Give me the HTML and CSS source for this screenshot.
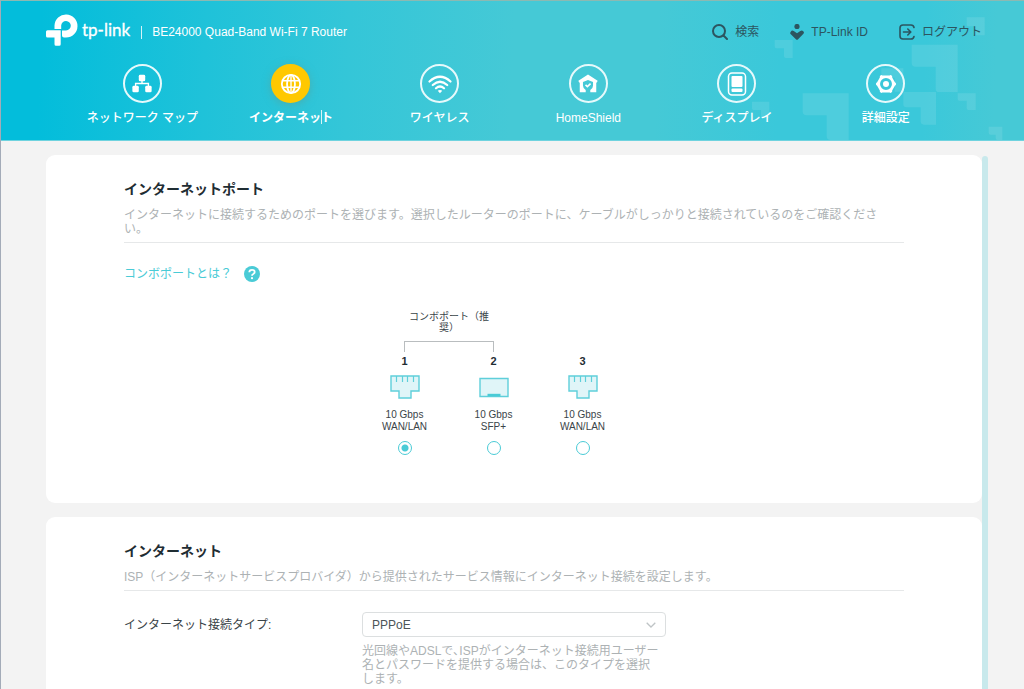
FILE: index.html
```html
<!DOCTYPE html>
<html lang="ja">
<head>
  <meta charset="UTF-8">
  <meta name="viewport" content="width=device-width, initial-scale=1.0">
  <title>BE24000 Quad-Band Wi-Fi 7 Router</title>
  <link rel="stylesheet" href="styles.css">
</head>
<body>
  <header class="header">
    <svg class="header-pattern" viewBox="0 0 1032 420" aria-hidden="true">
      <path d="M284 120h54v54h-20q-6 0-6-6v-23h-22q-6 0-6-6z"/>
      <path d="M695 134h138v142h-56q-10 0-10-10v-66h-60q-12 0-12-12z"/>
      <path d="M368 280h138v140h-54q-12 0-12-12v-62h-60q-12 0-12-12z"/>
      <path d="M670 276h98v98h-36q-10 0-10-10v-42h-42q-10 0-10-10z"/>
      <path d="M216 305h52v50h-20q-5 0-5-5v-20h-22q-5 0-5-5z"/>
      <path d="M833 280h54v50h-22q-5 0-5-5v-23h-22q-5 0-5-5z"/>
      <path d="M860 52h54v54h-22q-5 0-5-5v-22h-22q-5 0-5-5z"/>
      <path d="M926 380h41v40h-14q-6 0-6-6v-10h-15q-6 0-6-6z"/>
      <path d="M604 205h66v70h-26v-42h-34q-6 0-6-6z"/>
    </svg>

    <div class="topbar">
      <a class="logo" href="#">
        <svg width="32" height="32" viewBox="0 0 32 32" aria-hidden="true">
          <path fill="#fff" d="M8.500 15V11.500A11.500 11.500 0 1 1 20 23.500H18a2 2 0 0 1-2-2V16.500h4A4.800 4.800 0 1 0 15.200 11.500V15z"/>
          <path fill="#fff" d="M1.500 16.300h13.200v14a1.500 1.500 0 0 1-1.500 1.500H10a1.500 1.500 0 0 1-1.500-1.500V23.500h-7A1.500 1.500 0 0 1 0 22v-4.200a1.500 1.500 0 0 1 1.500-1.500z"/>
        </svg>
        <span class="logo-name">tp-link</span>
      </a>
      <span class="model">BE24000 Quad-Band Wi-Fi 7 Router</span>

      <div class="tools">
        <a class="tool" href="#">
          <svg width="16" height="16" viewBox="0 0 16 16" fill="none" stroke="#2c5560" stroke-width="2" stroke-linecap="round" aria-hidden="true">
            <circle cx="7" cy="7" r="6"/><path d="M11.500 11.500l3.500 3.500"/>
          </svg>
          検索
        </a>
        <a class="tool" href="#">
          <svg width="14" height="16" viewBox="0 0 14 16" fill="#2c5560" aria-hidden="true">
            <circle cx="7" cy="2.500" r="2.600"/>
            <path d="M.8 7.700a2 2 0 0 1 2.900-.6L7 9.300l3.300-2.200a2 2 0 0 1 2.900 3l-5.100 5.200a1.600 1.600 0 0 1-2.200 0L.8 10.300a1.900 1.900 0 0 1 0-2.600z"/>
          </svg>
          TP-Link ID
        </a>
        <a class="tool" href="#">
          <svg width="16" height="16" viewBox="0 0 16 16" fill="none" stroke="#2c5560" stroke-width="1.600" stroke-linecap="round" stroke-linejoin="round" aria-hidden="true">
            <path d="M15 3.500Q14.500 1 12 1H4Q1 1 1 4v8q0 3 3 3h8q2.500 0 3-2.500"/>
            <path d="M4.500 8h7M8.800 5l3 3-3 3"/>
          </svg>
          ログアウト
        </a>
      </div>
    </div>

    <nav class="nav">
      <a class="nav-item" href="#">
        <span class="nav-icon">
          <svg width="22" height="22" viewBox="0 0 24 24" fill="#fff" aria-hidden="true">
            <rect x="8.500" y="2" width="7" height="7" rx="1.500"/>
            <rect x="1.500" y="14" width="7" height="7" rx="1.500"/>
            <rect x="15.500" y="14" width="7" height="7" rx="1.500"/>
            <path d="M12 8v4M5 15v-3.500h14V15" fill="none" stroke="#fff" stroke-width="1.500"/>
          </svg>
        </span>
        <span class="nav-label">ネットワーク マップ</span>
      </a>
      <a class="nav-item active" href="#">
        <span class="nav-icon">
          <svg width="22" height="22" viewBox="0 0 24 24" fill="none" stroke="#fff" stroke-width="2" aria-hidden="true">
            <circle cx="12" cy="12" r="10"/>
            <ellipse cx="12" cy="12" rx="4.300" ry="10"/>
            <path d="M12 2v20M3 8.500h18M3 15.500h18" stroke-width="1.500"/>
          </svg>
        </span>
        <span class="nav-label">インターネッ<span class="caret"></span>ト</span>
      </a>
      <a class="nav-item" href="#">
        <span class="nav-icon">
          <svg width="24" height="20" viewBox="0 0 24 20" fill="none" stroke="#fff" stroke-width="2.200" stroke-linecap="round" aria-hidden="true">
            <path d="M1.500 7.500q10.500-9.500 21 0M4.800 11q7.200-6.500 14.400 0M8 14.300q4-3.600 8 0"/>
            <path d="M9.800 16.800q2.200-1.400 4.400 0L12 19.300z" fill="#fff" stroke="none"/>
          </svg>
        </span>
        <span class="nav-label">ワイヤレス</span>
      </a>
      <a class="nav-item" href="#">
        <span class="nav-icon">
          <svg width="22" height="22" viewBox="0 0 24 24" aria-hidden="true">
            <path fill="#fff" fill-rule="evenodd" d="M12 1.500l10.500 7-.9 2-.6-.3V21h-6.500v-2.500q3-2 3-5V9.700L12 7.500 6.500 9.700v3.800q0 3 3 5V21H3V10.200l-.6.300-.9-2z"/>
            <path d="M9.300 13l2 1.900 3.500-3.300" fill="none" stroke="#fff" stroke-width="1.700"/>
          </svg>
        </span>
        <span class="nav-label">HomeShield</span>
      </a>
      <a class="nav-item" href="#">
        <span class="nav-icon">
          <svg width="24" height="24" viewBox="0 0 24 24" aria-hidden="true">
            <rect x="3.500" y="1" width="17" height="22" rx="3.500" fill="none" stroke="#fff" stroke-width="1.500"/>
            <rect x="6.500" y="4" width="11" height="11" rx="1" fill="#fff"/>
            <rect x="6.500" y="16.500" width="11" height="3.500" rx="1" fill="#fff"/>
          </svg>
        </span>
        <span class="nav-label">ディスプレイ</span>
      </a>
      <a class="nav-item" href="#">
        <span class="nav-icon">
          <svg width="22" height="22" viewBox="0 0 24 24" fill="#fff" aria-hidden="true">
            <path fill-rule="evenodd" d="M5.500 3.200q1-1.400 2.600-.6h7.800q1.600-.8 2.600.6.500.8.200 1.800l3 5.200q1.300.6 1.300 1.800t-1.300 1.800l-3 5.200q.3 1-.2 1.800-1 1.400-2.600.6H8.100q-1.600.8-2.600-.6-.5-.8-.2-1.800l-3-5.200Q1 13.200 1 12t1.300-1.800l3-5.200q-.3-1 .2-1.800zM12 5.500a6.500 6.500 0 1 0 0 13 6.500 6.500 0 1 0 0-13z"/>
            <circle cx="12" cy="12" r="3.300"/>
          </svg>
        </span>
        <span class="nav-label">詳細設定</span>
      </a>
    </nav>
  </header>

  <main class="main">
    <div class="cards">
      <section class="card">
        <h2>インターネットポート</h2>
        <p class="desc">インターネットに接続するためのポートを選びます。選択したルーターのポートに、ケーブルがしっかりと接続されているのをご確認ください。</p>

        <a class="help" href="#">
          コンボポートとは？
          <svg width="16" height="16" viewBox="0 0 16 16" aria-hidden="true">
            <circle cx="8" cy="8" r="8" fill="#4acbd6"/>
            <path d="M5.300 6.300Q5.300 3.800 8 3.800t2.700 2.300Q10.700 7.300 9.300 8 8 8.600 8 9.800" fill="none" stroke="#fff" stroke-width="1.800"/>
            <circle cx="8" cy="12.200" r="1.100" fill="#fff"/>
          </svg>
        </a>

        <div class="ports">
          <div class="combo">
            <span class="combo-label">コンボポート（推奨）</span>
            <span class="bracket"></span>
          </div>
          <label class="port">
            <b>1</b>
            <svg width="30" height="24" viewBox="0 0 30 24" fill="#e0f5f8" stroke="#5fcfda" aria-hidden="true">
              <path d="M1 1h28v15h-8v7H9v-7H1z" stroke-width="1.400"/>
              <path d="M6.500 1v6M12.500 1v6M17.500 1v6M23.500 1v6" stroke-width="1.200"/>
            </svg>
            <span>10 Gbps<br>WAN/LAN</span>
            <input type="radio" name="port" value="1" checked>
          </label>
          <label class="port">
            <b>2</b>
            <svg width="30" height="24" viewBox="0 0 30 24" fill="#e0f5f8" stroke="#5fcfda" aria-hidden="true">
              <path d="M1 3.500h28v18H1z" stroke-width="1.400"/>
              <path d="M8.500 20h13" stroke="#4acbd6" stroke-width="2.400"/>
            </svg>
            <span>10 Gbps<br>SFP+</span>
            <input type="radio" name="port" value="2">
          </label>
          <label class="port">
            <b>3</b>
            <svg width="30" height="24" viewBox="0 0 30 24" fill="#e0f5f8" stroke="#5fcfda" aria-hidden="true">
              <path d="M1 1h28v15h-8v7H9v-7H1z" stroke-width="1.400"/>
              <path d="M6.500 1v6M12.500 1v6M17.500 1v6M23.500 1v6" stroke-width="1.200"/>
            </svg>
            <span>10 Gbps<br>WAN/LAN</span>
            <input type="radio" name="port" value="3">
          </label>
        </div>
      </section>

      <section class="card">
        <h2>インターネット</h2>
        <p class="desc">ISP（インターネットサービスプロバイダ）から提供されたサービス情報にインターネット接続を設定します。</p>

        <div class="form-row">
          <label for="connType">インターネット接続タイプ:</label>
          <div class="field">
            <div class="select">
              <select id="connType">
                <option>PPPoE</option>
              </select>
              <svg class="select-arrow" width="10" height="6" viewBox="0 0 10 6" aria-hidden="true">
                <path d="M.7.700L5 5l4.300-4.300" fill="none" stroke="#bfc4c6" stroke-width="1.300"/>
              </svg>
            </div>
            <p class="hint">光回線やADSLで､ISPがインターネット接続用ユーザー名とパスワードを提供する場合は、このタイプを選択します。</p>
          </div>
        </div>
      </section>
    </div>
    <div class="scrollbar"></div>
  </main>
</body>
</html>
```

FILE: styles.css
```css
* {
  box-sizing: border-box;
}
body {
  margin: 0;
  height: 100vh;
  display: flex;
  flex-direction: column;
  overflow: hidden;
  border-top: 1px solid #8cb9b2;
  border-left: 1px solid #a3abb8;
  background: #f3f3f3;
  font-family: "Liberation Sans", "Noto Sans CJK JP", sans-serif;
  font-size: 12px;
  color: #3a4448;
}
a {
  text-decoration: none;
}
h2, p {
  margin: 0;
}
svg {
  display: block;
  flex-shrink: 0;
}

/* header */
.header {
  position: relative;
  flex-shrink: 0;
  padding: 11px 42px 14px 45px;
  border-bottom: 1px solid #6fd3df;
  background: linear-gradient(92deg, #03bddb 4%, #1fc2d9 20%, #34c6d8 34%, #45c9d6 50%, #45c9d6 64%, #3ac8da 76%, #3ac8da 90%, #46c9d6 97%);
}
.header-pattern {
  position: absolute;
  right: 0;
  top: -1px;
  width: 344px;
  height: 140px;
  fill: #fff;
  opacity: 0.1;
}
.topbar {
  position: relative;
  display: flex;
  align-items: center;
  height: 40px;
}
.logo {
  display: flex;
  align-items: center;
  gap: 4px;
  height: 32px;
  margin-bottom: 5px;
  color: #fff;
}
.logo-name {
  font-family: Lato, sans-serif;
  font-size: 17px;
  line-height: 32px;
  -webkit-text-stroke: 0.3px #fff;
}
.model {
  margin-left: 11px;
  padding-left: 10px;
  border-left: 1px solid #d5f3f7;
  line-height: 13px;
  color: #fff;
}
.tools {
  display: flex;
  gap: 31px;
  margin-left: auto;
}
.tool {
  display: flex;
  align-items: center;
  gap: 7px;
  line-height: 16px;
  color: #2c5560;
}
.nav {
  position: relative;
  display: grid;
  grid-template-columns: repeat(6, 1fr);
  padding: 0 22px;
  margin-top: 12px;
}
.nav-item {
  display: flex;
  flex-direction: column;
  align-items: center;
  gap: 7px;
  color: #fff;
}
.nav-icon {
  display: flex;
  align-items: center;
  justify-content: center;
  width: 39px;
  height: 39px;
  border: 2px solid #e6f9fb;
  border-radius: 50%;
}
.nav-label {
  font-weight: 500;
  line-height: 16px;
}
.active .nav-icon {
  border-color: #ffc800;
  background: #ffc800;
  box-shadow: 0 2px 8px rgba(90, 160, 150, 0.6);
}
.active .nav-label {
  font-weight: bold;
}
.caret {
  position: absolute;
  width: 1px;
  height: 14px;
  background: #d9f4f7;
}

/* content */
.main {
  flex: 1;
  min-height: 0;
  display: flex;
  padding: 14px 36px 0 45px;
  overflow: hidden;
}
.cards {
  flex: 1;
  display: flex;
  flex-direction: column;
  gap: 14px;
}
.scrollbar {
  width: 6px;
  margin-top: 1px;
  border-radius: 3px 3px 0 0;
  background: #c8e9ec;
}
.card {
  flex-shrink: 0;
  padding: 24px 78px 48px;
  border-radius: 9px;
  background: #fff;
}
.card h2 {
  font-size: 14px;
  line-height: 20px;
  color: #1f2d33;
}
.desc {
  margin-top: 9px;
  padding: 0 4px 6px 0;
  border-bottom: 1px solid #e6e8e9;
  line-height: 14px;
  color: #adb2b4;
}
.help {
  display: flex;
  align-items: center;
  gap: 12px;
  margin-top: 23px;
  line-height: 16px;
  color: #4acbd6;
}

/* ports */
.ports {
  display: grid;
  grid-template-columns: repeat(3, 89px);
  padding-left: 236px;
  margin-top: 29px;
  font-size: 10px;
}
.combo {
  grid-column: 1 / 3;
  display: flex;
  flex-direction: column;
  align-items: center;
  gap: 8px;
}
.combo-label {
  width: 84px;
  line-height: 11px;
  text-align: center;
}
.bracket {
  width: 90px;
  height: 11px;
  border: 1px solid #b9bdbf;
  border-bottom: 0;
}
.port {
  grid-row: 2;
  display: flex;
  flex-direction: column;
  align-items: center;
  padding-top: 2px;
  line-height: 12px;
  text-align: center;
}
.port b {
  margin-bottom: 7px;
  font-size: 11px;
  line-height: 14px;
  color: #1f2d33;
}
.port span {
  margin: 10px 0 8px;
}
.port input {
  appearance: none;
  width: 14px;
  height: 14px;
  margin: 0;
  border: 1px solid #4acbd6;
  border-radius: 50%;
  background: #fff;
}
.port input:checked {
  background: radial-gradient(circle, #4acbd6 3px, #fff 4px);
}

/* connection form */
.form-row {
  display: grid;
  grid-template-columns: 238px 304px;
  margin-top: 21px;
}
.form-row label {
  line-height: 26px;
}
.select {
  position: relative;
}
.select select {
  appearance: none;
  display: block;
  width: 100%;
  height: 25px;
  padding: 0 30px 0 9px;
  border: 1px solid #dcdfe0;
  border-radius: 4px;
  background: #fff;
  font: inherit;
  color: #4c5558;
}
.select-arrow {
  position: absolute;
  right: 10px;
  top: 10px;
  pointer-events: none;
}
.hint {
  margin-top: 7px;
  padding-right: 5px;
  line-height: 14px;
  color: #adb2b4;
}
```
